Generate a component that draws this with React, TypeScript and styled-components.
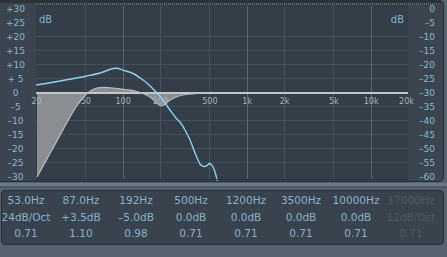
import styled, { createGlobalStyle } from 'styled-components'

const GlobalStyle = createGlobalStyle`
  html, body {
    margin: 0;
    padding: 0;
    background: #56636e;
  }
  body {
    font-family: 'DejaVu Sans', 'Liberation Sans', sans-serif;
  }
`

// log frequency scale: 20Hz at x=36, 20kHz at x=408
const freqX = (f: number) => 36 + 124 * (Math.log10(f) - Math.log10(20))

type Pt = [number, number]

// catmull-rom -> cubic bezier
const smoothPath = (pts: Pt[]) => {
  let d = `M${pts[0][0]},${pts[0][1]}`
  for (let i = 0; i < pts.length - 1; i++) {
    const p0 = pts[i - 1] || pts[i]
    const p1 = pts[i]
    const p2 = pts[i + 1]
    const p3 = pts[i + 2] || p2
    const c1x = p1[0] + (p2[0] - p0[0]) / 6
    const c1y = p1[1] + (p2[1] - p0[1]) / 6
    const c2x = p2[0] - (p3[0] - p1[0]) / 6
    const c2y = p2[1] - (p3[1] - p1[1]) / 6
    d += ` C${c1x.toFixed(1)},${c1y.toFixed(1)} ${c2x.toFixed(1)},${c2y.toFixed(1)} ${p2[0]},${p2[1]}`
  }
  return d
}

const eqCurve: Pt[] = [
  [37, 177], [50, 153.5], [62, 131.5], [70, 117], [76, 107], [81, 100],
  [86, 94.5], [91, 90.5], [97, 88], [104, 87.3], [113, 88], [125, 89.5],
  [135, 91], [143, 93.5], [150, 97], [155, 101.5], [160, 105.5], [164, 105],
  [169, 101], [176, 97], [186, 94.5], [198, 93.3], [210, 93],
]

const analyzerCurve: Pt[] = [
  [36, 85], [56, 81.7], [87, 76], [100, 73], [115, 68.3], [124, 70.5],
  [133, 73.5], [141, 78.5], [148, 84], [156, 92], [163, 100], [170, 110],
  [176, 118], [181, 123.5], [185, 130], [190, 140], [195, 153], [200, 164],
  [204, 166.5], [207, 165.5], [210, 163.5], [213, 167], [215, 172], [217.5, 181.5],
]

const gridFreqs = [50, 100, 200, 500, 1000, 2000, 5000, 10000]
const freqLabels: [number, string][] = [
  [20, '20'], [50, '50'], [100, '100'], [200, '200'], [500, '500'],
  [1000, '1k'], [2000, '2k'], [5000, '5k'], [10000, '10k'], [20000, '20k'],
]
const gridDb = [36.5, 50.5, 64.5, 78.5, 106.5, 120.5, 134.5, 148.5, 162.5]

const leftScale = ['+30', '+25', '+20', '+15', '+10', '+ 5', '0', '–5', '–10', '–15', '–20', '–25', '–30']
const rightScale = ['0', '–5', '–10', '–15', '–20', '–25', '–30', '–35', '–40', '–45', '–50', '–55', '–60']

const bands = [
  { freq: '53.0Hz', gain: '24dB/Oct', q: '0.71', on: true },
  { freq: '87.0Hz', gain: '+3.5dB', q: '1.10', on: true },
  { freq: '192Hz', gain: '–5.0dB', q: '0.98', on: true },
  { freq: '500Hz', gain: '0.0dB', q: '0.71', on: true },
  { freq: '1200Hz', gain: '0.0dB', q: '0.71', on: true },
  { freq: '3500Hz', gain: '0.0dB', q: '0.71', on: true },
  { freq: '10000Hz', gain: '0.0dB', q: '0.71', on: true },
  { freq: '17000Hz', gain: '12dB/Oct', q: '0.71', on: false },
]

const Window = styled.div`
  width: 447px;
  height: 257px;
  overflow: hidden;
  display: flex;
  flex-direction: column;
  background: #56636e;
`

// graph panel
const TopPanel = styled.div`
  box-sizing: border-box;
  width: 444px;
  height: 182px;
  display: flex;
  flex-direction: column;
  background: #3a4550;
  border-right: 1px solid #262e35;
  border-bottom: 1px solid #262e35;
  border-radius: 0 5px 5px 0;
  overflow: hidden;
`

const TopRail = styled.div`
  height: 3px;
  flex: none;
  background: #2b333b;
`

const DottedRail = styled.div`
  height: 3px;
  flex: none;
  margin-left: 36px;
  margin-right: 4px;
  background:
    linear-gradient(#333e48, #333e48) bottom / 100% 1px no-repeat,
    repeating-linear-gradient(90deg, #5c6873 0 1px, #2f3942 1px 2px);
`

const GraphRow = styled.div`
  flex: 1;
  display: flex;
  flex-direction: row;
`

const Scale = styled.div<{ $side: 'left' | 'right' }>`
  width: 36px;
  flex: none;
  display: flex;
  flex-direction: column;
  margin-top: -4px;
  box-sizing: border-box;
  padding: ${(p) => (p.$side === 'left' ? '0 5px 0 0' : '0 9px 0 0')};
  text-align: ${(p) => (p.$side === 'left' ? 'center' : 'right')};
  color: #8cb8d2;
  font-size: 9px;
  line-height: 14px;
  white-space: pre;
`

const GraphSvg = styled.svg`
  display: block;
  flex: none;
  overflow: visible;
`

const FreqText = styled.text`
  font-family: 'DejaVu Sans', sans-serif;
  font-size: 8px;
  fill: #abb4bc;
`

const UnitText = styled.text`
  font-family: 'DejaVu Sans', sans-serif;
  font-size: 10px;
  fill: #80b4d4;
`

const Divider = styled.div`
  height: 8px;
  flex: none;
  background: linear-gradient(
    #56636e 0 1px,
    #6b7984 1px 4px,
    #4d5964 4px 6px,
    #56636e 6px
  );
`

// band parameters
const ParamPanel = styled.div`
  box-sizing: border-box;
  width: 443px;
  height: 55px;
  margin-left: 1px;
  background: #38434e;
  border: 1px solid #252c33;
  border-radius: 4px;
  overflow: hidden;
`

const ParamGrid = styled.div`
  display: grid;
  grid-template-columns: repeat(8, 55px);
  margin-left: -3.5px;
  padding-top: 1px;
`

const Band = styled.div<{ $on: boolean }>`
  display: flex;
  flex-direction: column;
  align-items: center;
  color: ${(p) => (p.$on ? '#8ab2cb' : '#4f5a63')};
  font-size: 10.5px;
  line-height: 16.5px;
  white-space: nowrap;
`

function GraphView() {
  const fillD = smoothPath(eqCurve) + ' L37,93 Z'
  return (
    <GraphSvg width={372} height={175} viewBox="36 6 372 175">
      <rect x={36} y={6} width={372} height={174} fill="#333e48" />
      {gridDb.map((y) => (
        <line key={y} x1={36} x2={408} y1={y} y2={y} stroke="#44505b" strokeWidth={1} />
      ))}
      {gridFreqs.map((f) => {
        const x = Math.round(freqX(f)) + 0.5
        const decade = f === 100 || f === 1000 || f === 10000
        return (
          <line
            key={f}
            x1={x}
            x2={x}
            y1={6}
            y2={180}
            stroke={decade ? '#5a6772' : '#46525d'}
            strokeWidth={1}
          />
        )
      })}
      <path d={fillD} fill="#8a8e93" />
      <line x1={36} x2={408} y1={93} y2={93} stroke="#c3c6c9" strokeWidth={2} />
      <path d={smoothPath(eqCurve)} fill="none" stroke="#b9bdc1" strokeWidth={1.2} />
      {freqLabels.map(([f, label]) => (
        <FreqText key={f} x={f === 20000 ? 406.5 : freqX(f) + 0.5} y={103.5} textAnchor="middle">
          {label}
        </FreqText>
      ))}
      <UnitText x={39} y={23}>dB</UnitText>
      <UnitText x={404} y={23} textAnchor="end">dB</UnitText>
      <path
        d={smoothPath(analyzerCurve)}
        fill="none"
        stroke="#8fd2ee"
        strokeWidth={1.4}
        strokeLinejoin="round"
      />
      <line x1={36} x2={408} y1={179.5} y2={179.5} stroke="#2a3239" strokeWidth={1} />
    </GraphSvg>
  )
}

export default function App() {
  return (
    <>
      <GlobalStyle />
      <Window>
        <TopPanel>
          <TopRail />
          <DottedRail />
          <GraphRow>
            <Scale $side="left">
              {leftScale.map((s) => (
                <span key={s}>{s}</span>
              ))}
            </Scale>
            <GraphView />
            <Scale $side="right">
              {rightScale.map((s) => (
                <span key={s}>{s}</span>
              ))}
            </Scale>
          </GraphRow>
        </TopPanel>
        <Divider />
        <ParamPanel>
          <ParamGrid>
            {bands.map((b) => (
              <Band key={b.freq} $on={b.on}>
                <span>{b.freq}</span>
                <span>{b.gain}</span>
                <span>{b.q}</span>
              </Band>
            ))}
          </ParamGrid>
        </ParamPanel>
      </Window>
    </>
  )
}
